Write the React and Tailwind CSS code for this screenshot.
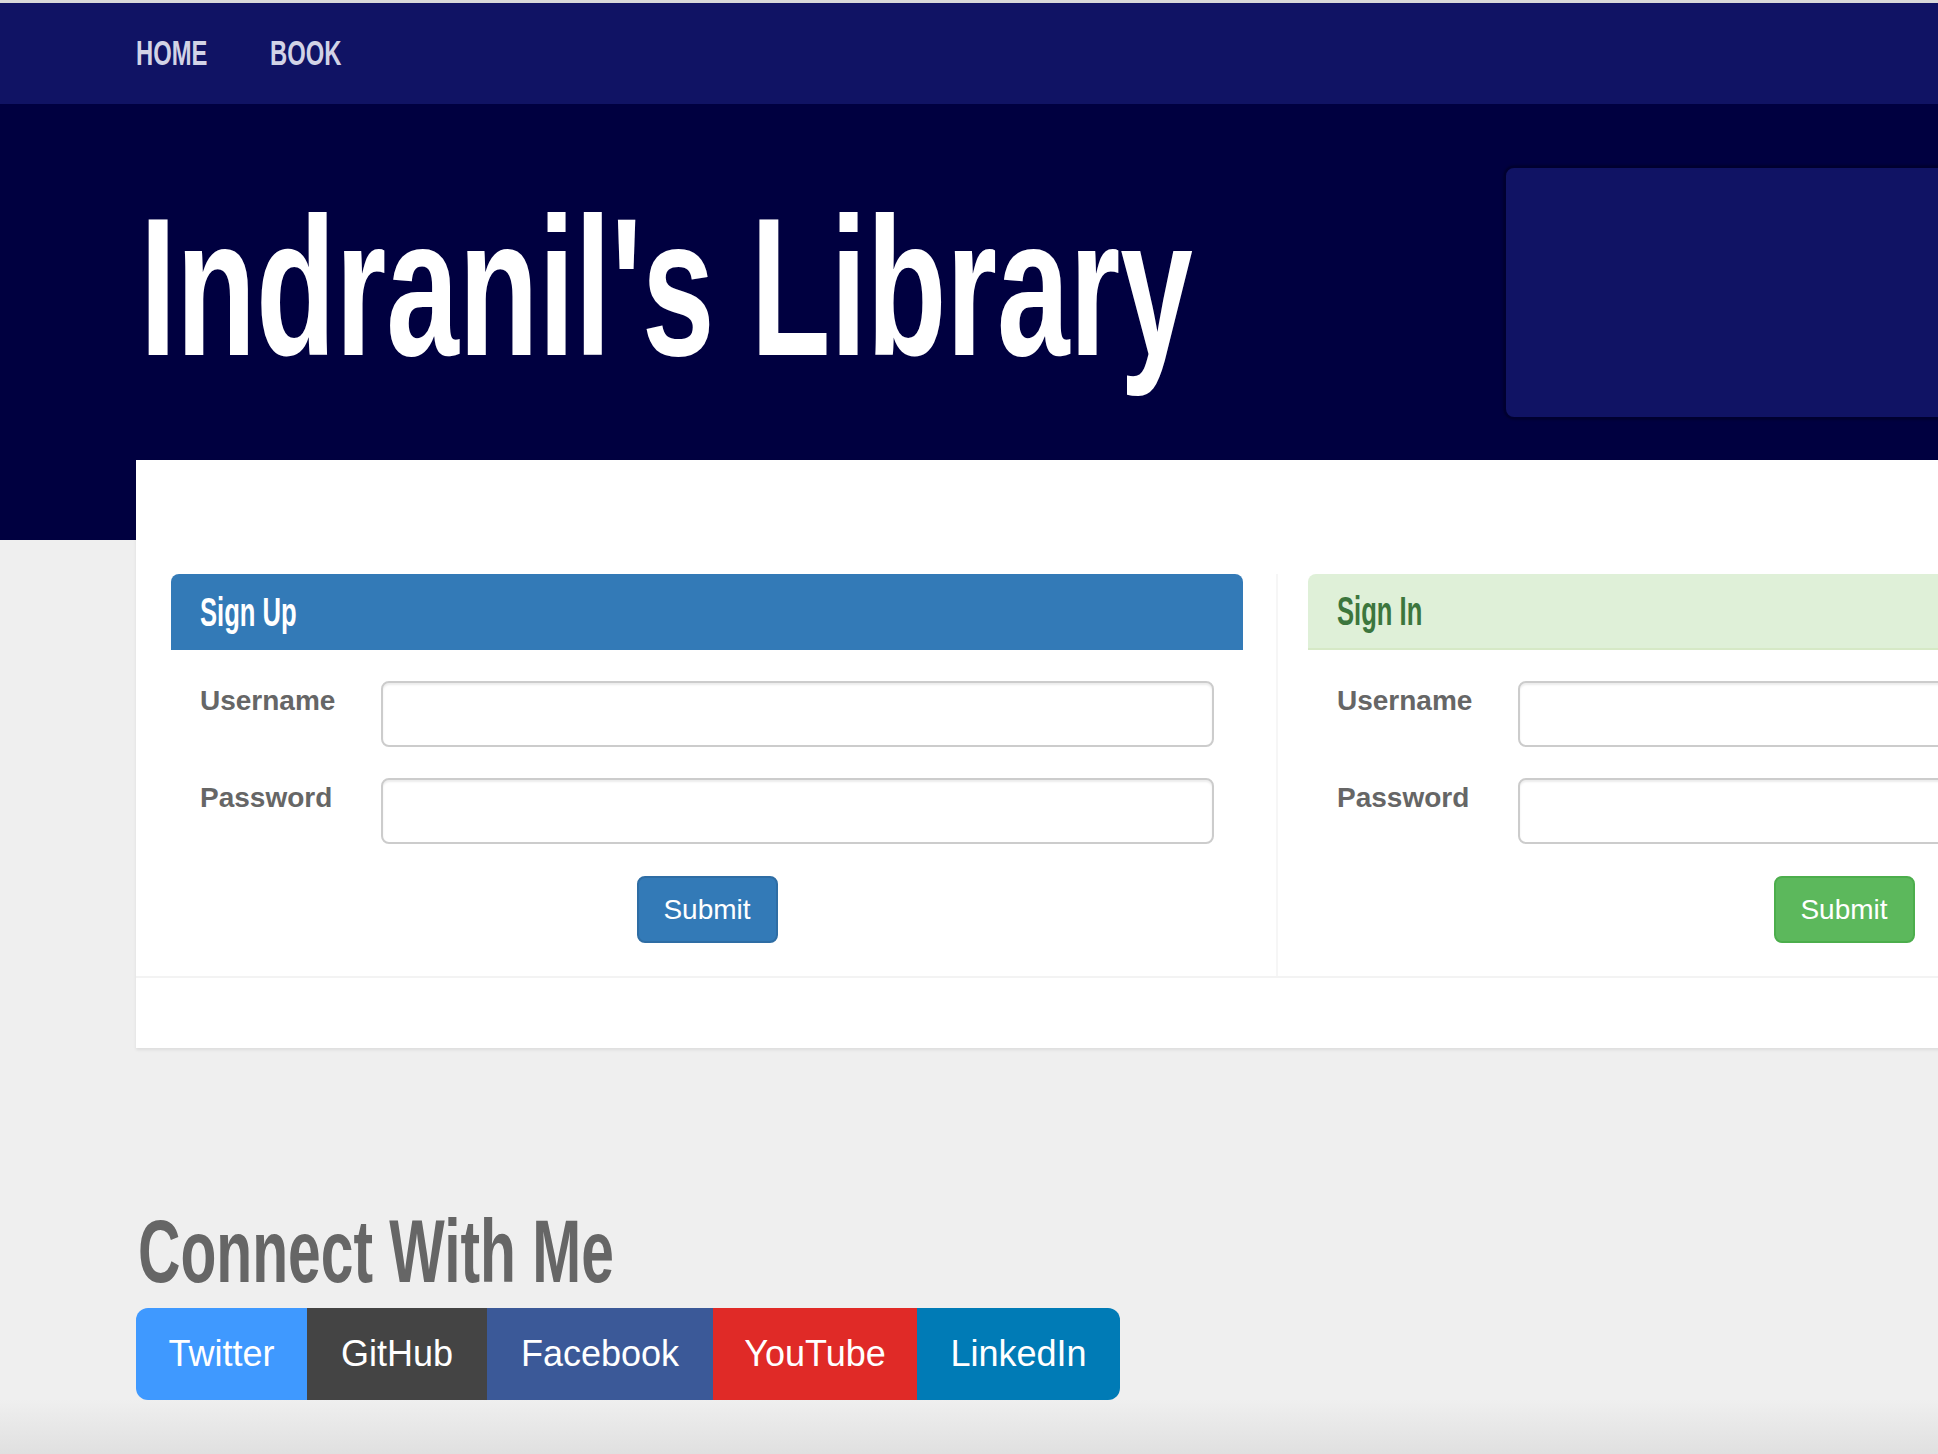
import React from "react";

const FONT = { fontFamily: '"Liberation Sans", Arial, sans-serif' };

function FormRow({ label, last }) {
  return (
    <div className={`flex items-start ${last ? "mt-[31px]" : ""}`}>
      <label className="w-[181px] shrink-0 text-[28px] leading-[40px] font-bold text-[#666]">{label}</label>
      <input
        type={label === "Password" ? "password" : "text"}
        className="flex-1 h-[66px] rounded-[8px] border-2 border-[#ccc] bg-white shadow-[inset_0_2px_2px_rgba(0,0,0,0.075)] outline-none"
      />
    </div>
  );
}

function Panel({ title, variant }) {
  const primary = variant === "primary";
  return (
    <div className="w-[1072px] shrink-0">
      <div
        className={
          primary
            ? "h-[76px] flex items-center pl-[29px] bg-[#337ab7] rounded-t-[8px]"
            : "h-[76px] flex items-center pl-[29px] bg-[#dff0d8] border-b-2 border-[#d6e9c6] rounded-t-[8px]"
        }
      >
        <span
          className={`inline-block origin-left scale-x-[0.64] whitespace-nowrap text-[40px] leading-[40px] font-bold ${
            primary ? "text-white" : "text-[#3c763d]"
          }`}
        >
          {title}
        </span>
      </div>
      <div className="px-[29px] pt-[31px] pb-[33px]">
        <FormRow label="Username" />
        <FormRow label="Password" last />
        <div className="flex justify-center mt-[32px]">
          <button
            className={
              primary
                ? "w-[141px] h-[67px] rounded-[8px] border-2 border-[#2e6da4] bg-[#337ab7] text-white text-[28px]"
                : "w-[141px] h-[67px] rounded-[8px] border-2 border-[#4cae4c] bg-[#5cb85c] text-white text-[28px]"
            }
          >
            Submit
          </button>
        </div>
      </div>
    </div>
  );
}

export default function App() {
  const socials = [
    { name: "Twitter", cls: "w-[171px] bg-[#3f99ff] rounded-l-[12px]" },
    { name: "GitHub", cls: "w-[180px] bg-[#444444]" },
    { name: "Facebook", cls: "w-[226px] bg-[#3b5998]" },
    { name: "YouTube", cls: "w-[204px] bg-[#e02a27]" },
    { name: "LinkedIn", cls: "w-[203px] bg-[#007bb6] rounded-r-[12px]" },
  ];
  return (
    <div style={FONT} className="w-full h-[1454px] overflow-hidden bg-[#efefef]">
      <div className="h-[3px] bg-[#d9d9d9]" />
      {/* Navbar */}
      <nav className="h-[101px] bg-[#101364] flex items-center">
        <div className="w-[136px] shrink-0" />
        <a className="w-[134px] shrink-0">
          <span className="inline-block origin-left scale-x-[0.68] whitespace-nowrap text-[35px] font-bold text-[#d2d3e6]">HOME</span>
        </a>
        <a className="w-[134px] shrink-0">
          <span className="inline-block origin-left scale-x-[0.68] whitespace-nowrap text-[35px] font-bold text-[#d2d3e6]">BOOK</span>
        </a>
      </nav>
      {/* Hero */}
      <header className="h-[436px] bg-[#000040] flex pl-[140px]">
        <div className="w-[1364px] shrink-0 pt-[85px]">
          <h1 className="inline-block origin-left scale-x-[0.662] whitespace-nowrap text-[197px] leading-[197px] font-bold text-white">
            Indranil's Library
          </h1>
        </div>
        <div className="mt-[62px] w-[700px] h-[253px] shrink-0 rounded-[10px] bg-[#101364] border-2 border-[#000030] shadow-[0_0_3px_rgba(0,0,0,0.5)]" />
      </header>
      {/* Card */}
      <section className="relative -mt-[80px] ml-[136px] w-[2400px] h-[588px] bg-white shadow-[0_2px_3px_rgba(0,0,0,0.08)] pt-[114px]">
        <div className="flex">
          <div className="pl-[35px] pr-[33px]">
            <Panel title="Sign Up" variant="primary" />
          </div>
          <div className="border-l-2 border-[#f6f6f6] pl-[30px]">
            <Panel title="Sign In" variant="success" />
          </div>
        </div>
        <div className="h-[2px] bg-[#f3f3f3]" />
      </section>
      {/* Connect */}
      <section className="ml-[136px] mt-[159px]">
        <h2 className="ml-[2px] inline-block origin-left scale-x-[0.66] whitespace-nowrap text-[89px] leading-[89px] font-bold text-[#666]">
          Connect With Me
        </h2>
        <div className="flex mt-[12px]">
          {socials.map((s) => (
            <a key={s.name} className={`h-[92px] flex items-center justify-center text-white text-[36px] ${s.cls}`}>
              {s.name}
            </a>
          ))}
        </div>
      </section>
      <div className="h-[54px] bg-gradient-to-b from-[#efefef] to-[#e0e0e0]" />
    </div>
  );
}
